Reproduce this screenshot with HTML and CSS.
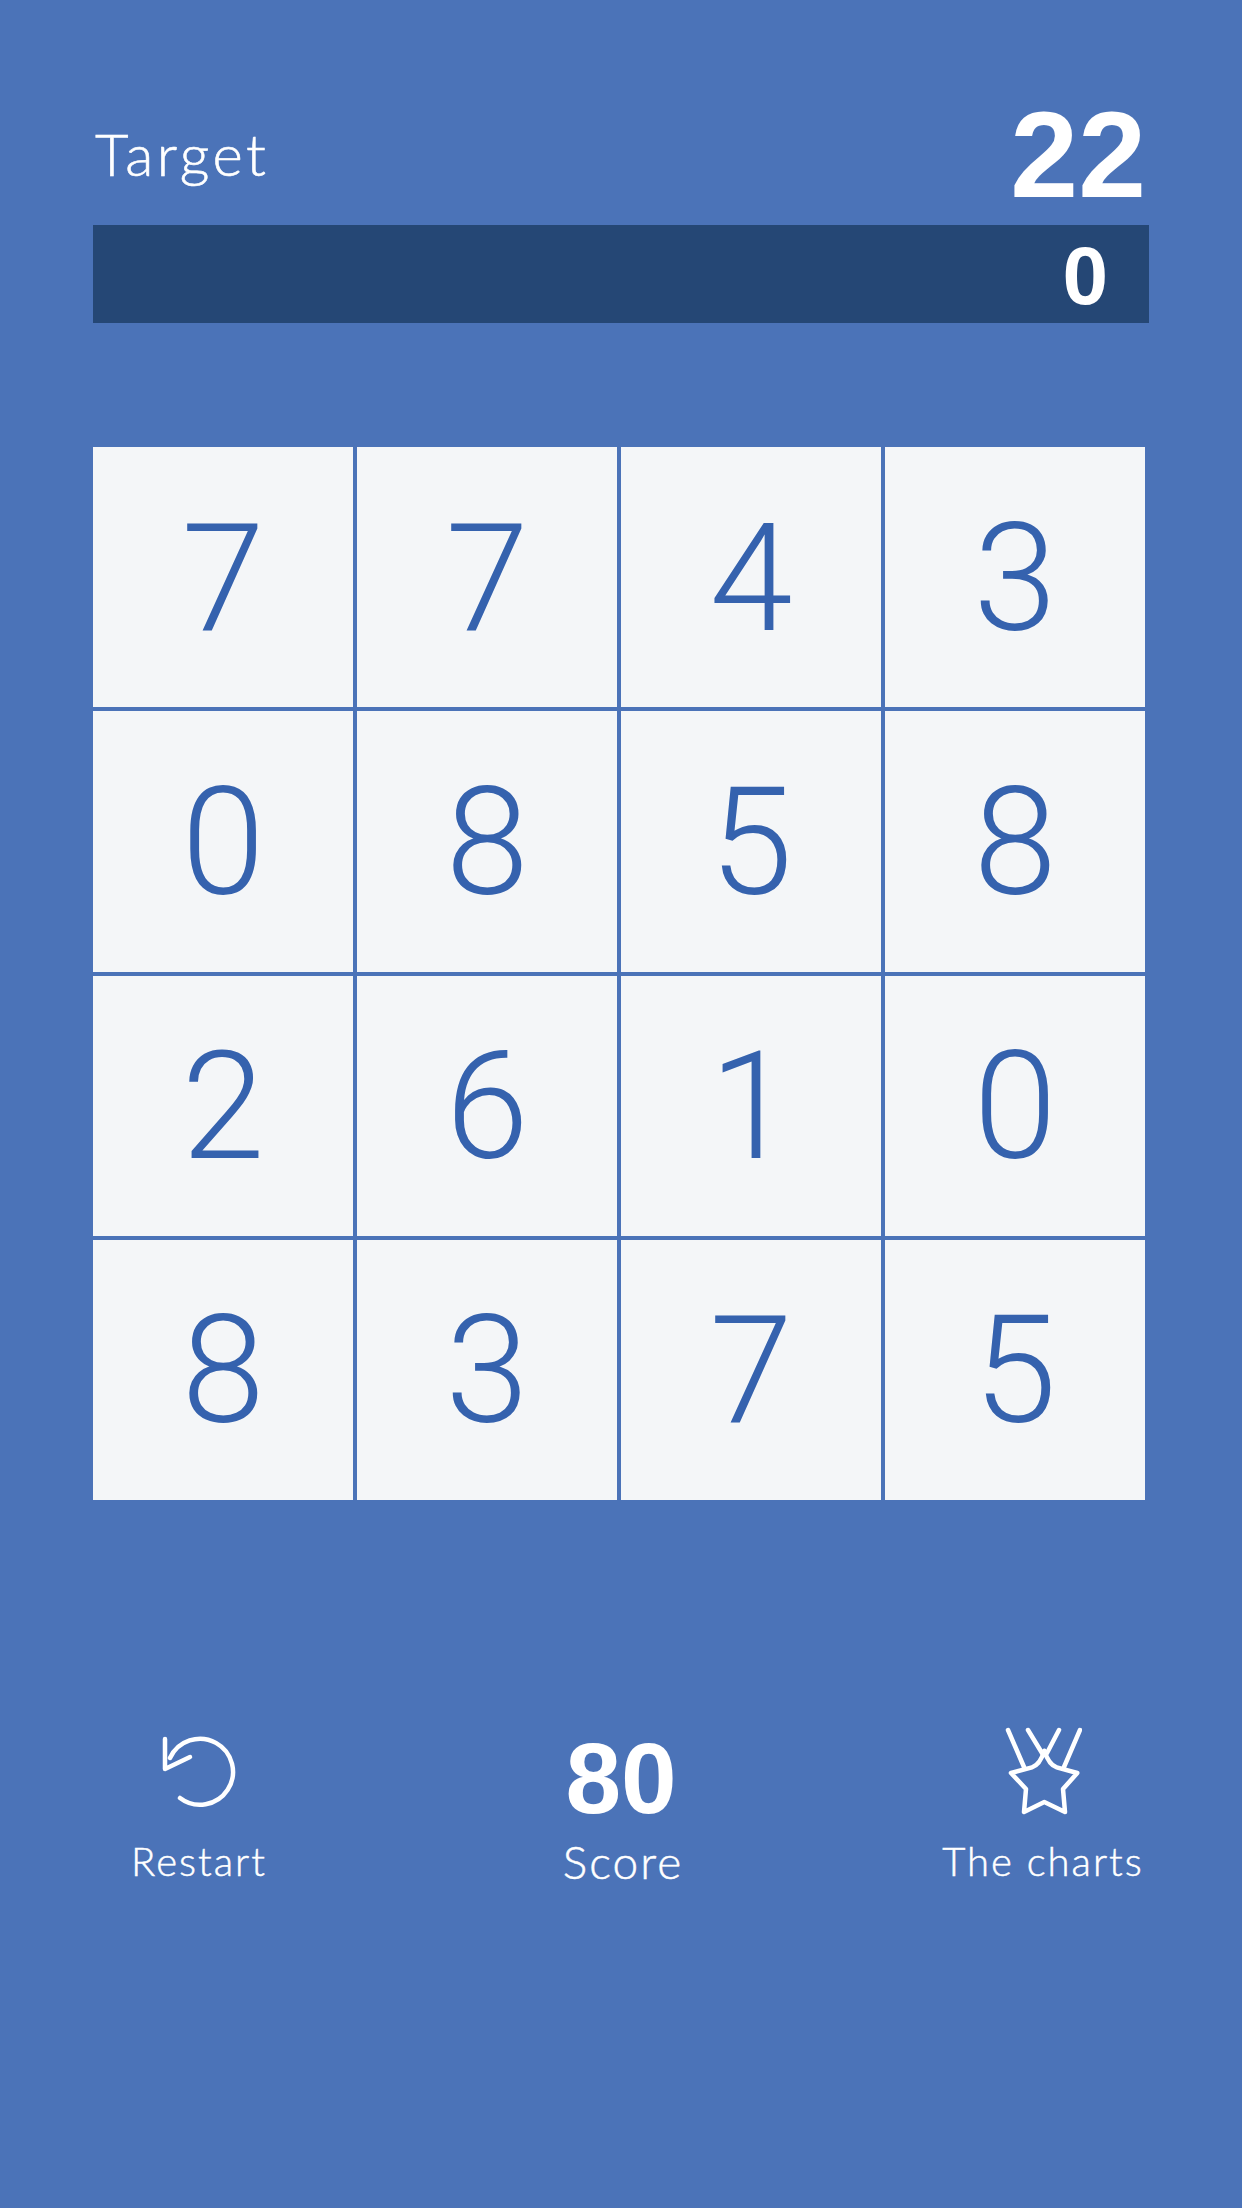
FILE: index.html
```html
<!DOCTYPE html>
<html lang="en">
<head>
    <meta charset="UTF-8">
    <meta name="viewport" content="width=device-width, initial-scale=1.0">
    <title>Target</title>
    <link rel="stylesheet" href="styles.css">
</head>
<body>

    <div class="top">
        <div class="target-row">
            <span class="target-label">Target</span>
            <span class="target-value">22</span>
        </div>
        <div class="sum-bar">0</div>
    </div>

    <div class="board">
        <div class="cell">7</div>
        <div class="cell">7</div>
        <div class="cell">4</div>
        <div class="cell">3</div>
        <div class="cell">0</div>
        <div class="cell">8</div>
        <div class="cell">5</div>
        <div class="cell">8</div>
        <div class="cell">2</div>
        <div class="cell">6</div>
        <div class="cell">1</div>
        <div class="cell">0</div>
        <div class="cell">8</div>
        <div class="cell">3</div>
        <div class="cell">7</div>
        <div class="cell">5</div>
    </div>

    <div class="footer">
        <div class="footer-item">
            <div class="icon-slot">
                <svg class="icon-restart" viewBox="60 33 78 76">
                    <path d="M80 97A33 33 0 1 0 70 57"/>
                    <path d="M65 38V68L90 56"/>
                </svg>
            </div>
            <div class="footer-label">Restart</div>
        </div>
        <div class="footer-item">
            <div class="score">80</div>
            <div class="score-label">Score</div>
        </div>
        <div class="footer-item">
            <div class="icon-slot">
                <svg class="icon-charts" viewBox="85 27 77 91">
                    <path d="M124.3 51.7Q129 66 136.7 68.3L157.3 74L143 90L145 113L124.3 103L104 113L106 90L91 74L112 68.3Q120 66 124.3 51.7Z"/>
                    <path d="M88 31L104 68M108 31L122 54M139 31L127 54M160 31L144 68"/>
                </svg>
            </div>
            <div class="footer-label">The charts</div>
        </div>
    </div>

</body>
</html>
```

FILE: styles.css
```css
body {
    margin: 0;
    height: 2208px;
    overflow: hidden;
    background-color: #4b73b8;
    color: white;
    font-family: Lato, sans-serif;
}
.top {
    padding: 93px 93px 0;
}
.target-row {
    display: flex;
    justify-content: space-between;
    align-items: center;
    height: 132px;
    padding-right: 3px;
}
.target-label {
    font-size: 58px;
    font-weight: 300;
    letter-spacing: 3.5px;
    padding-left: 2px;
    line-height: 68px;
    margin-bottom: 10px;
    -webkit-text-stroke: 0.6px white;
}
.target-value {
    font-family: "Liberation Sans", Arial, sans-serif;
    font-size: 122px;
    font-weight: bold;
    line-height: 132px;
    margin-bottom: 8px;
}
.sum-bar {
    height: 98px;
    line-height: 102px;
    background-color: #254775;
    text-align: right;
    padding-right: 41px;
    font-family: "Liberation Sans", Arial, sans-serif;
    font-size: 82px;
    font-weight: bold;
}
.board {
    display: grid;
    grid-template-columns: repeat(4, 260px);
    grid-auto-rows: 260.25px;
    column-gap: 4px;
    row-gap: 4px;
    margin: 124px 0 0 93px;
}
.cell {
    display: flex;
    align-items: center;
    justify-content: center;
    background-color: #f4f6f8;
    color: #3562ae;
    font-family: Roboto, sans-serif;
    font-size: 150px;
    font-weight: 340;
    padding-top: 3px;
    box-sizing: border-box;
}
.footer {
    display: flex;
    justify-content: space-between;
    padding: 226px 49px 0;
}
.footer-item {
    width: 300px;
    display: flex;
    flex-direction: column;
    align-items: center;
}
.icon-slot {
    height: 91px;
    display: flex;
    align-items: center;
}
.icon-restart, .icon-charts {
    fill: none;
    stroke: white;
    stroke-width: 4.5;
    stroke-linejoin: round;
    stroke-linecap: round;
}
.icon-restart {
    width: 78px;
    height: 76px;
}
.icon-charts {
    width: 77px;
    height: 91px;
}
.footer-label {
    margin-top: 20px;
    font-size: 40px;
    font-weight: 300;
    letter-spacing: 2px;
    line-height: 48px;
    -webkit-text-stroke: 0.5px white;
}
.score {
    font-family: "Liberation Sans", Arial, sans-serif;
    font-size: 100px;
    font-weight: bold;
    line-height: 92px;
    margin-top: 6px;
}
.score-label {
    margin-top: 12px;
    padding-left: 4px;
    font-size: 46px;
    font-weight: 300;
    letter-spacing: 2px;
    line-height: 52px;
    -webkit-text-stroke: 0.5px white;
}
```
